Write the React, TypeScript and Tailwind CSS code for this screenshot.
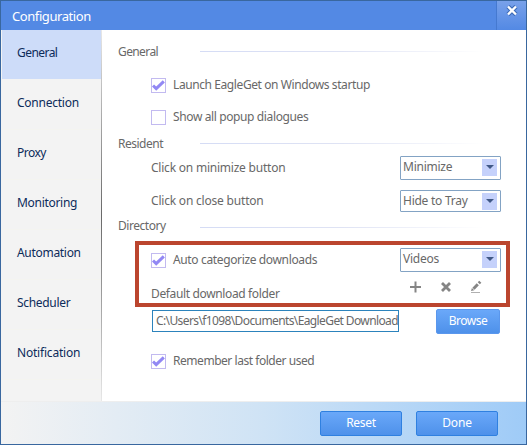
import { ReactNode } from "react";

function Check({ on }: { on?: boolean }) {
  return (
    <span className="flex size-[15px] shrink-0 items-center justify-center border border-[#c2baf0] bg-white">
      {on && (
        <svg width="13" height="13" viewBox="0 0 13 13" fill="none">
          <path d="M1 6.5 L4.2 9.6 L11.8 2.4" stroke="#9288f4" strokeWidth="3" />
        </svg>
      )}
    </span>
  );
}

function Select({ value, className }: { value: string; className: string }) {
  return (
    <div className={`flex w-[101px] shrink-0 justify-between rounded-[1px] border border-[#83a3c4] bg-white pl-[2px] pr-[3px] tracking-[-0.25px] ${className}`}>
      <span className="leading-[20px]">{value}</span>
      <span className="mt-[2px] flex h-[17px] w-[15px] justify-center bg-[#c5d1fb] pt-[6px]">
        <svg width="8" height="4" viewBox="0 0 8 4">
          <path d="M0 0h8L4 4z" fill="#405886" />
        </svg>
      </span>
    </div>
  );
}

function Section({ title, className, line }: { title: string; className: string; line: string }) {
  return (
    <div className={`flex items-center pl-[16px] ${className}`}>
      <span className="w-[82px] leading-none">{title}</span>
      <span className={`h-px w-[284px] bg-linear-to-r from-[#d5dcf5] via-[#dfe3f4] to-white ${line}`} />
    </div>
  );
}

function Row({ className, children }: { className: string; children: ReactNode }) {
  return <div className={`flex items-center pl-[49px] ${className}`}>{children}</div>;
}

const button =
  "flex h-[25px] items-center justify-center rounded-[2px] border bg-linear-to-b from-[#6aa8f9] to-[#4e91ea] text-white";

const tabs = [
  ["General", "tracking-[-0.55px]"],
  ["Connection", "tracking-[-0.25px]"],
  ["Proxy", "tracking-[-0.5px]"],
  ["Monitoring", "tracking-[-0.3px]"],
  ["Automation", "tracking-[-0.3px]"],
  ["Scheduler", "tracking-[-0.32px]"],
  ["Notification", "tracking-[-0.2px]"],
];

export default function App() {
  return (
    <div className="relative flex h-[445px] w-[527px] flex-col overflow-hidden border border-[#39679f] bg-white font-['Noto_Sans',sans-serif] text-[12px] whitespace-nowrap text-[#686868]">
      <header className="flex h-[29px] shrink-0 justify-between bg-[#5389e4] pl-[11px] text-white">
        <h1 className="text-[13px] leading-[31px] tracking-[-0.42px]">Configuration</h1>
        <button className="flex w-[30px] justify-center border-l border-[#4579d0] bg-linear-to-b from-[#78a1ea] to-[#5389e4] pt-[4px]">
          <svg width="12" height="11" viewBox="0 0 12 11">
            <path d="M2 1.5l8 8M10 1.5l-8 8" stroke="#3d6bb6" strokeWidth="4.5" />
            <path d="M2 1.5l8 8M10 1.5l-8 8" stroke="#fff" strokeWidth="2.4" />
          </svg>
        </button>
      </header>
      <div className="flex h-[371px] shrink-0">
        <nav className="w-[101px] shrink-0 border-r border-[#e1e1df] bg-[#f3f3f3] pl-px text-[#0c2b5a]">
          {tabs.map(([name, tracking], i) => (
            <div
              key={name}
              className={`flex h-[50px] items-center border-b pb-[4px] pl-[15px] ${tracking} ${i === 0 ? "border-[#f3f3f3] bg-[#cddcf9]" : "border-[#f4f4f0]"}`}
            >
              {name}
            </div>
          ))}
        </nav>
        <span className="-ml-px w-px bg-linear-to-b from-[#e8e8e8] via-[#696969] to-[#e8e8e8]" />
        <main className="w-[424px]">
          <Section title="General" className="h-[43px] tracking-[-0.6px]" line="" />
          <Row className="h-[24px] gap-[7px]">
            <Check on />
            <span className="tracking-[-0.41px]">Launch EagleGet on Windows startup</span>
          </Row>
          <Row className="h-[40px] gap-[7px]">
            <Check />
            <span className="tracking-[-0.38px]">Show all popup dialogues</span>
          </Row>
          <Section title="Resident" className="h-[14px] tracking-[-0.5px]" line="mb-[2px]" />
          <Row className="h-[33px]">
            <span className="w-[249px] tracking-[-0.22px]">Click on minimize button</span>
            <Select value="Minimize" className="h-[24px]" />
          </Row>
          <Row className="h-[34px]">
            <span className="w-[249px] tracking-[-0.2px]">Click on close button</span>
            <Select value="Hide to Tray" className="h-[22px]" />
          </Row>
          <Section title="Directory" className="h-[16px] tracking-[-0.45px]" line="mt-[2px]" />
          <Row className="h-[52px]">
            <Check on />
            <span className="ml-[7px] w-[227px] tracking-[-0.36px]">Auto categorize downloads</span>
            <Select value="Videos" className="h-[24px]" />
          </Row>
          <Row className="h-[16px]">
            <span className="w-[258px] tracking-[-0.36px]">Default download folder</span>
            <svg className="mb-[14px]" width="74" height="14" viewBox="0 0 74 14" stroke="#858585" fill="none">
              <path d="M1 7h11M6.5 1.5v11" strokeWidth="2" />
              <path d="M33 3l8 8M41 3l-8 8" strokeWidth="2.8" />
              <path d="M64.5 8.8L68.8 4.3M69.8 3.3l1.5-1.5" strokeWidth="3" />
              <path d="M62 11l.9-3 2.4 2.2z" fill="#858585" stroke="none" />
              <path d="M62 12.5h9" stroke="#b0b0b0" strokeWidth="1" />
            </svg>
          </Row>
          <Row className="h-[38px]">
            <div className="ml-px h-[22px] w-[247px] border border-[#2c83bc] pl-[3px] leading-[19px] tracking-[-0.61px]">
              C:\Users\f1098\Documents\EagleGet Download
            </div>
            <button className={`${button} ml-[37px] w-[64px] border-[#5a97ed] tracking-[-0.5px]`}>Browse</button>
          </Row>
          <Row className="h-[42px] gap-[7px]">
            <Check on />
            <span className="tracking-[-0.46px]">Remember last folder used</span>
          </Row>
        </main>
      </div>
      <footer className="flex h-[43px] items-center gap-[14px] border-t border-[#eeeeee] bg-linear-to-r from-[#f3f3f3] via-[#cfe3f5] to-[#9fcbf7] pl-[319px]">
        <button className={`${button} w-[82px] border-[#2f80e0] tracking-[-0.3px]`}>Reset</button>
        <button className={`${button} w-[82px] border-[#2f80e0] tracking-[-0.2px]`}>Done</button>
      </footer>
      <div className="pointer-events-none absolute top-[240px] left-[134px] h-[66px] w-[375px] border-4 border-[#bb452e]" />
    </div>
  );
}
